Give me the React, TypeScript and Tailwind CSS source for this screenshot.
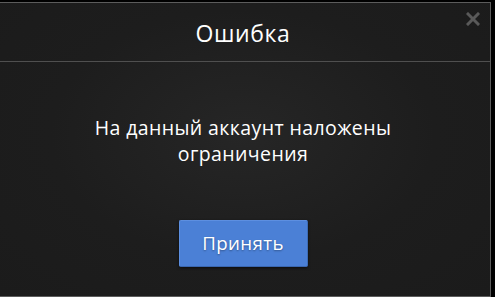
import React from 'react';

export default function App() {
  return (
    <div className="w-[495px] h-[297px] bg-black overflow-hidden pt-[2px] pr-[4px] font-['Open_Sans',sans-serif]">
      <div className="relative -ml-[4px] h-[295px] flex flex-col border-t border-r border-b border-[#5c5c5c] bg-[radial-gradient(ellipse_at_50%_45%,#262626_0%,#1d1d1d_55%,#1b1b1b_100%)]">
        <button className="absolute right-[10px] top-[9px] text-[#595959] leading-none">
          <svg width="14" height="14" viewBox="0 0 14 14">
            <path d="M2 2 L12 12 M12 2 L2 12" stroke="currentColor" strokeWidth="3" strokeLinecap="square" />
          </svg>
        </button>
        <div className="h-[59px] flex items-center justify-center border-b border-[#4f4f4f] pt-[3px]">
          <h2 className="text-[23px] text-white tracking-[0.6px]">Ошибка</h2>
        </div>
        <div className="flex-1 flex flex-col items-center">
          <p className="mt-[53px] text-[19.5px] leading-[26px] text-white text-center w-[340px] tracking-[0.4px]">
            На данный аккаунт наложены ограничения
          </p>
          <button className="mt-[53px] w-[129px] h-[47px] rounded-[2px] bg-[#4b80d6] border border-[#5d8fe0] border-b-[#3a67b0] border-r-[#3d6cb5] shadow-[0_1px_3px_rgba(0,0,0,0.6)] text-white text-[18.7px] tracking-[0.4px] [text-shadow:0_1px_2px_rgba(0,0,0,0.35)]">
            Принять
          </button>
        </div>
      </div>
    </div>
  );
}
